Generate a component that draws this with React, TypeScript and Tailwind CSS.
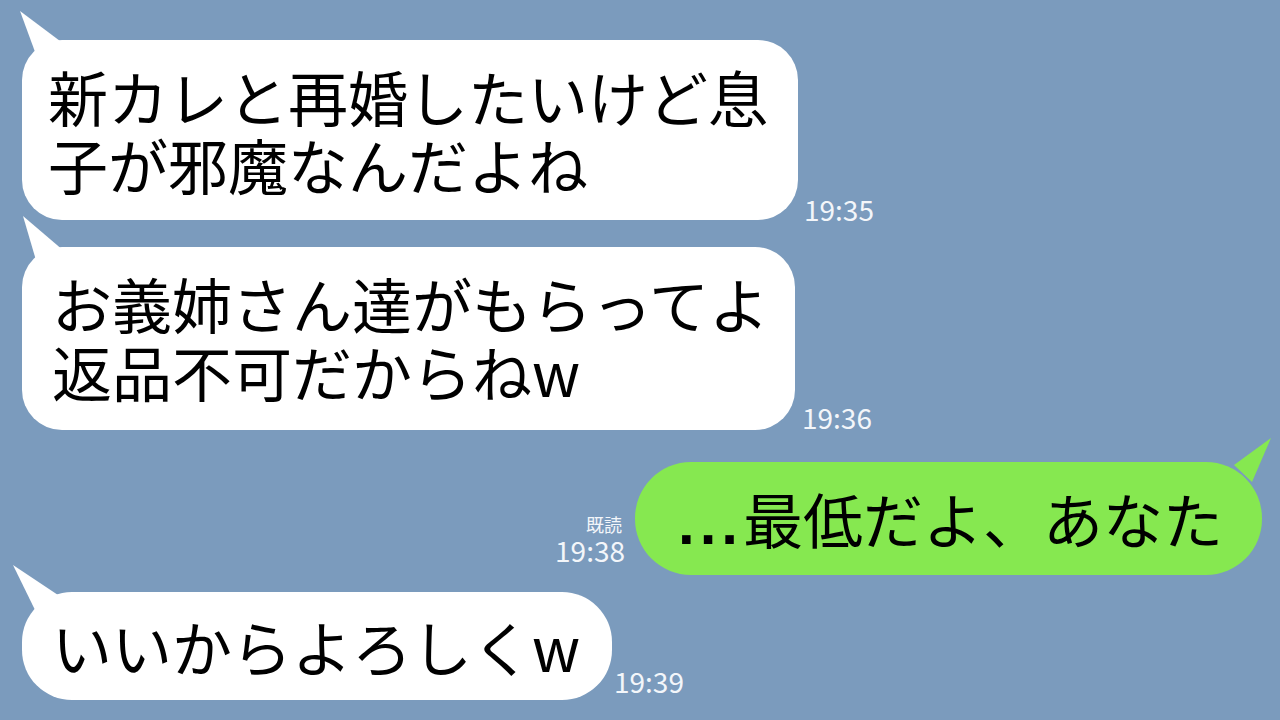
import React from "react";

const font = { fontFamily: '"Noto Sans CJK JP", "Noto Sans", sans-serif' };

function TailLeft({ points }: { points: string }) {
  return (
    <svg className="absolute left-0 top-0 overflow-visible" width="1" height="1">
      <polygon points={points} fill="#ffffff" />
    </svg>
  );
}

export default function App() {
  return (
    <div
      className="w-[1280px] h-[720px] bg-[#7b9bbd] overflow-hidden flex flex-col pt-[40px] pl-[22px] pr-[18px]"
      style={font}
    >
      {/* Row 1 */}
      <div className="flex items-end">
        <div className="relative bg-white rounded-[40px] w-[776px] h-[180px] pl-[26px] pt-[22px] text-[60px] leading-[68px] text-black">
          <TailLeft points="-2,-29 16,20 42,4" />
          <span className="relative">新カレと再婚したいけど息<br />子が邪魔なんだよね</span>
        </div>
        <div className="ml-[6px] mb-[-4px] text-[28px] leading-[30px] text-[#f3f6fa]">19:35</div>
      </div>

      {/* Row 2 */}
      <div className="flex items-end mt-[27px]">
        <div className="relative bg-white rounded-[40px] w-[773px] h-[183px] pl-[30px] pt-[22px] text-[60px] leading-[68px] text-black">
          <TailLeft points="1,-31 16,20 42,4" />
          <span className="relative">お義姉さん達がもらってよ<br />返品不可だからねw</span>
        </div>
        <div className="ml-[7px] mb-[-2px] text-[28px] leading-[30px] text-[#f3f6fa]">19:36</div>
      </div>

      {/* Row 3 */}
      <div className="flex items-end justify-end mt-[32px]">
        <div className="flex flex-col items-end mr-[10px] mb-[10px] text-[#f3f6fa]">
          <div className="text-[18px] leading-[21px] mr-[3px]">既読</div>
          <div className="text-[28px] leading-[30px]">19:38</div>
        </div>
        <div className="relative bg-[#86e850] rounded-[56px] w-[627px] h-[113px] pl-[43px] pt-[22px] text-[60px] leading-[68px] text-black">
          <svg className="absolute right-0 top-0 overflow-visible" width="1" height="1">
            <polygon points="-27,3 10,-24 -9,20" fill="#86e850" />
          </svg>
          <span className="relative">
            <span className="font-bold tracking-[5px]" style={{ fontFamily: '"Liberation Sans", sans-serif' }}>...</span>
            最低だよ、あなた
          </span>
        </div>
      </div>

      {/* Row 4 */}
      <div className="flex items-end mt-[17px]">
        <div className="relative bg-white rounded-[50px] w-[590px] h-[108px] pl-[30px] pt-[20px] text-[60px] leading-[68px] text-black">
          <TailLeft points="-9,-27 14,20 36,3" />
          <span className="relative">いいからよろしくw</span>
        </div>
        <div className="ml-[2px] mb-[4px] text-[28px] leading-[30px] text-[#f3f6fa]">19:39</div>
      </div>
    </div>
  );
}
